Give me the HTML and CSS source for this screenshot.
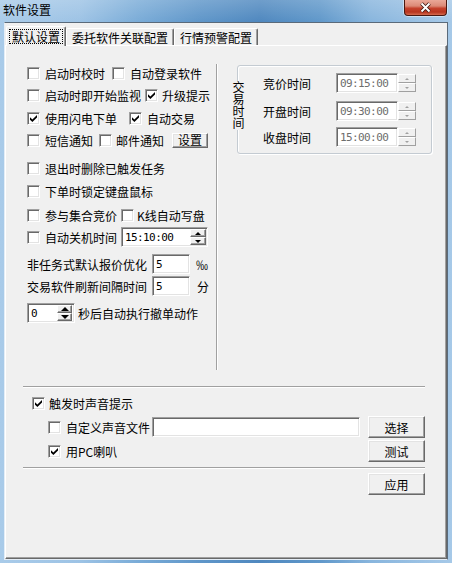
FILE: index.html
```html
<!DOCTYPE html>
<html lang="zh-CN">
<head>
<meta charset="utf-8">
<title>软件设置</title>
<link rel="stylesheet" href="styles.css">
</head>
<body>
<div class="window">
  <div class="titlebar">
    <span class="title">软件设置</span>
    <div class="close">
      <svg width="13" height="11" viewBox="0 0 13 11"><path d="M2.5 1.5 L10.5 9.5 M10.5 1.5 L2.5 9.5" stroke="#3b1710" stroke-width="3.6" fill="none"/><path d="M2.5 1.5 L10.5 9.5 M10.5 1.5 L2.5 9.5" stroke="#fff" stroke-width="2" fill="none"/></svg>
    </div>
  </div>
  <div class="client">
    <div class="tabs">
      <div class="tab sel t1"><span class="focus">默认设置</span></div>
      <div class="tab t2">委托软件关联配置</div>
      <div class="tab t3">行情预警配置</div>
    </div>
    <div class="panel">
      <div class="top">
        <div class="leftcol">
          <div class="row"><span class="cb"></span><span>启动时校时</span><span class="cb ml7"></span><span>自动登录软件</span></div>
          <div class="row"><span class="cb"></span><span>启动时即开始监视</span><span class="cb ml4 mr4"><svg class="chk" width="7" height="7" viewBox="0 0 7 7"><path d="M0 2.3 L2.4 4.6 L7 0 L7 2.4 L2.4 7 L0 4.7 Z" fill="#000"/></svg></span><span>升级提示</span></div>
          <div class="row mt1"><span class="cb"><svg class="chk" width="7" height="7" viewBox="0 0 7 7"><path d="M0 2.3 L2.4 4.6 L7 0 L7 2.4 L2.4 7 L0 4.7 Z" fill="#000"/></svg></span><span>使用闪电下单</span><span class="cb ml12"><svg class="chk" width="7" height="7" viewBox="0 0 7 7"><path d="M0 2.3 L2.4 4.6 L7 0 L7 2.4 L2.4 7 L0 4.7 Z" fill="#000"/></svg></span><span>自动交易</span></div>
          <div class="row"><span class="cb"></span><span>短信通知</span><span class="cb ml6 mr4"></span><span>邮件通知</span><span class="btn small">设置</span></div>
          <div class="row mt6"><span class="cb"></span><span>退出时删除已触发任务</span></div>
          <div class="row mt1"><span class="cb"></span><span>下单时锁定键盘鼠标</span></div>
          <div class="row mt2"><span class="cb"></span><span>参与集合竞价</span><span class="cb ml4 mr3"></span><span>K线自动写盘</span></div>
          <div class="row"><span class="cb"></span><span>自动关机时间</span>
            <div class="spinbox sb-time">
              <span class="val">15:10:00</span>
              <div class="spins">
                <span class="sbtn"><i class="up"></i></span>
                <span class="sbtn"><i class="down"></i></span>
              </div>
            </div>
          </div>
          <div class="row mt5"><span>非任务式默认报价优化</span><span class="field num ml5">5</span><span class="ml6">‰</span></div>
          <div class="row"><span>交易软件刷新间隔时间</span><span class="field num ml5">5</span><span class="ml7">分</span></div>
          <div class="row mt5">
            <div class="spinbox sb-zero">
              <span class="val">0</span>
              <div class="spins">
                <span class="sbtn"><i class="up big"></i></span>
                <span class="sbtn"><i class="down big"></i></span>
              </div>
            </div>
            <span class="ml3">秒后自动执行撤单动作</span>
          </div>
        </div>
        <div class="vsep"></div>
        <div class="rightcol">
          <div class="group">
            <span class="gtitle">交易时间</span>
            <div class="grow"><span class="glabel">竞价时间</span><span class="field dis">09:15:00</span><div class="gspin"><span class="sbtn"><i class="up tiny"></i></span><span class="sbtn"><i class="down tiny"></i></span></div></div>
            <div class="grow g2"><span class="glabel">开盘时间</span><span class="field dis">09:30:00</span><div class="gspin"><span class="sbtn"><i class="up tiny"></i></span><span class="sbtn"><i class="down tiny"></i></span></div></div>
            <div class="grow g3"><span class="glabel">收盘时间</span><span class="field dis">15:00:00</span><div class="gspin"><span class="sbtn"><i class="up tiny"></i></span><span class="sbtn"><i class="down tiny"></i></span></div></div>
          </div>
        </div>
      </div>
      <div class="hsep first"></div>
      <div class="row brow b0"><span class="cb mr4"><svg class="chk" width="7" height="7" viewBox="0 0 7 7"><path d="M0 2.3 L2.4 4.6 L7 0 L7 2.4 L2.4 7 L0 4.7 Z" fill="#000"/></svg></span><span>触发时声音提示</span></div>
      <div class="row brow b1"><span class="cb"></span><span>自定义声音文件</span><span class="field file ml2"></span><span class="btn">选择</span></div>
      <div class="row brow b1"><span class="cb"><svg class="chk" width="7" height="7" viewBox="0 0 7 7"><path d="M0 2.3 L2.4 4.6 L7 0 L7 2.4 L2.4 7 L0 4.7 Z" fill="#000"/></svg></span><span>用PC喇叭</span><span class="btn">测试</span></div>
      <div class="hsep second"></div>
      <div class="row brow b2"><span class="btn">应用</span></div>
    </div>
  </div>
</div>
</body>
</html>
```
FILE: styles.css
```css
* { box-sizing: border-box; }
body {
  margin: 0;
  font-family: "Noto Sans CJK SC", "Noto Sans", sans-serif;
  font-size: 12px;
  color: #000;
}
.window {
  width: 452px;
  height: 563px;
  overflow: hidden;
  display: flex;
  flex-direction: column;
  background:
    linear-gradient(180deg, rgba(255,255,255,0.18), rgba(255,255,255,0) 22px),
    linear-gradient(90deg, #a9cbe9 0, #9dc3e5 80px, #79abd7 140px, #5f96c9 200px, #4f88bf 260px, #6098ca 320px, #88b5dd 370px, #a6c9e8 452px);
}
.titlebar {
  height: 22px;
  flex: none;
  display: flex;
  align-items: flex-start;
}
.title {
  margin: 3px 0 0 3px;
  line-height: 14px;
}
.close {
  margin-left: auto;
  margin-right: 5px;
  width: 43px;
  height: 16px;
  border: 1px solid #4a1810;
  border-top: none;
  border-radius: 0 0 4px 4px;
  background: linear-gradient(180deg, #eaa898 0%, #dc8a77 40%, #c5422d 55%, #b8351f 80%, #d46a4e 100%);
  box-shadow: 0 0 0 1px rgba(255,255,255,0.45);
  display: flex;
  align-items: center;
  justify-content: center;
}
.client {
  margin: 0 4px;
  height: 538px;
  flex: none;
  border: 1px solid;
  border-color: #5a6a7a #5a6a7a #e4edf6 #e4edf6;
  background: #f0f0f0;
  display: flex;
  flex-direction: column;
}
.tabs {
  height: 22px;
  flex: none;
  display: flex;
  align-items: flex-end;
  padding-left: 1px;
}
.tab {
  height: 17px;
  padding: 1px 0 0 5px;
  display: flex;
  align-items: center;
  border: 1px solid;
  border-bottom: none;
  border-color: #fff #696969 transparent #fff;
  box-shadow: inset -1px 0 #a0a0a0;
  border-radius: 2px 2px 0 0;
  background: #f0f0f0;
  white-space: nowrap;
}
.t1 { width: 60px; }
.t2 { width: 108px; }
.t3 { width: 84px; }
.tab.sel {
  height: 20px;
  margin-bottom: -1px;
  position: relative;
  z-index: 1;
  padding: 0 0 0 2px;
}
.focus {
  border: 1px dotted #000;
  padding: 0 2px;
  line-height: 13px;
}
.panel {
  flex: 1;
  border: 1px solid;
  border-color: #fff #696969 #696969 #fff;
  box-shadow: inset -1px -1px #a0a0a0;
  display: flex;
  flex-direction: column;
}
.top {
  display: flex;
  height: 308px;
  margin-top: 16px;
  flex: none;
}
.leftcol {
  width: 210px;
  padding-left: 21px;
}
.row {
  height: 22px;
  flex: none;
  display: flex;
  align-items: center;
  white-space: nowrap;
}
.mt1 { margin-top: 1px; }
.mt2 { margin-top: 2px; }
.mt5 { margin-top: 5px; }
.mt6 { margin-top: 6px; }
.ml2 { margin-left: 2px; }
.ml3 { margin-left: 3px; }
.ml4 { margin-left: 4px; }
.ml5 { margin-left: 5px; }
.ml6 { margin-left: 6px; }
.ml7 { margin-left: 7px; }
.ml12 { margin-left: 12px; }
.cb {
  width: 13px;
  height: 13px;
  flex: none;
  background: #fff;
  border: 1px solid;
  border-color: #a0a0a0 #fff #fff #a0a0a0;
  box-shadow: inset 1px 1px #696969, inset -1px -1px #e3e3e3;
  margin-right: 5px;
  display: flex;
  align-items: center;
  justify-content: center;
}
.cb.mr4 { margin-right: 4px; }
.cb.mr3 { margin-right: 3px; }
.chk { display: block; }

.field {
  height: 20px;
  flex: none;
  background: #fff;
  border: 1px solid;
  border-color: #a0a0a0 #fff #fff #a0a0a0;
  box-shadow: inset 1px 1px #696969, inset -1px -1px #e3e3e3;
  display: flex;
  align-items: center;
  padding-left: 3px;
  font-family: "DejaVu Sans Mono", monospace;
  font-size: 11px;
  letter-spacing: -0.6px;
}
.field.num { width: 38px; }
.field.file { width: 208px; }
.field.dis {
  width: 62px;
  color: #6d6d6d;
}

.btn {
  width: 57px;
  height: 22px;
  flex: none;
  display: flex;
  align-items: center;
  justify-content: center;
  border: 1px solid;
  border-color: #fff #696969 #696969 #fff;
  box-shadow: inset -1px -1px #a0a0a0, inset 1px 1px #e3e3e3;
  background: #f0f0f0;
  margin-left: auto;
  margin-right: 21px;
}
.btn.small {
  width: 36px;
  height: 15px;
  margin: 0 0 0 8px;
  line-height: 12px;
}

.spinbox {
  height: 20px;
  flex: none;
  display: flex;
  background: #fff;
  border: 1px solid;
  border-color: #a0a0a0 #fff #fff #a0a0a0;
  box-shadow: inset 1px 1px #696969, inset -1px -1px #e3e3e3;
  padding: 1px 1px 1px 1px;
}
.spinbox .val {
  flex: 1;
  display: flex;
  align-items: center;
  padding-left: 2px;
  font-family: "DejaVu Sans Mono", monospace;
  font-size: 11px;
  letter-spacing: -0.6px;
}
.sb-time { width: 87px; margin-left: 4px; }
.sb-time .spins { width: 16px; }
.sb-zero { width: 48px; }
.sb-zero .spins { width: 15px; margin-right: 1px; }
.spins {
  display: flex;
  flex-direction: column;
}
.sbtn {
  flex: 1;
  display: flex;
  align-items: center;
  justify-content: center;
  background: #f0f0f0;
  border: 1px solid;
  border-color: #fff #696969 #696969 #fff;
  box-shadow: inset -1px -1px #a0a0a0;
}
.up, .down {
  display: block;
  width: 0;
  height: 0;
  border-left: 3px solid transparent;
  border-right: 3px solid transparent;
}
.up { border-bottom: 3px solid #000; }
.down { border-top: 3px solid #000; }
.up.big, .down.big { border-left-width: 4px; border-right-width: 4px; }
.up.big { border-bottom-width: 4px; }
.down.big { border-top-width: 4px; }
.up.tiny, .down.tiny { border-left-width: 2px; border-right-width: 2px; }
.up.tiny { border-bottom: 2px solid #a0a0a0; }
.down.tiny { border-top: 2px solid #a0a0a0; }

.vsep {
  width: 2px;
  border-left: 1px solid #a0a0a0;
  border-right: 1px solid #fff;
  margin-top: 2px;
}
.rightcol {
  padding-left: 19px;
}
.group {
  position: relative;
  width: 195px;
  height: 89px;
  margin-top: 3px;
  border: 1px solid #c4cbd2;
  border-radius: 3px;
  box-shadow: inset 1px 1px #fff, 1px 1px #fff;
  padding: 7px 0 0 25px;
}
.gtitle {
  position: absolute;
  left: -6px;
  top: 15px;
  width: 12px;
  height: 49px;
  background: #f0f0f0;
  writing-mode: vertical-rl;
  line-height: 12px;
}
.grow {
  height: 20px;
  display: flex;
  align-items: center;
}
.grow.g2 { margin-top: 8px; }
.grow.g3 { margin-top: 6px; }
.glabel { width: 73px; flex: none; }
.gspin {
  width: 18px;
  height: 20px;
  display: flex;
  flex-direction: column;
  padding: 1px 0;
}
.gspin .sbtn {
  border-color: #fff #a0a0a0 #a0a0a0 #fff;
  box-shadow: none;
}

.hsep {
  flex: none;
  width: 402px;
  margin-left: 17px;
  border-top: 1px solid #a0a0a0;
  border-bottom: 1px solid #fff;
}
.hsep.first { margin-top: 16px; }
.hsep.second { margin-top: 5px; }
.brow.b0 { margin-top: 4px; padding-left: 26px; }
.brow.b1 { margin-top: 2px; padding-left: 42px; }
.brow.b2 { margin-top: 4px; }
```
